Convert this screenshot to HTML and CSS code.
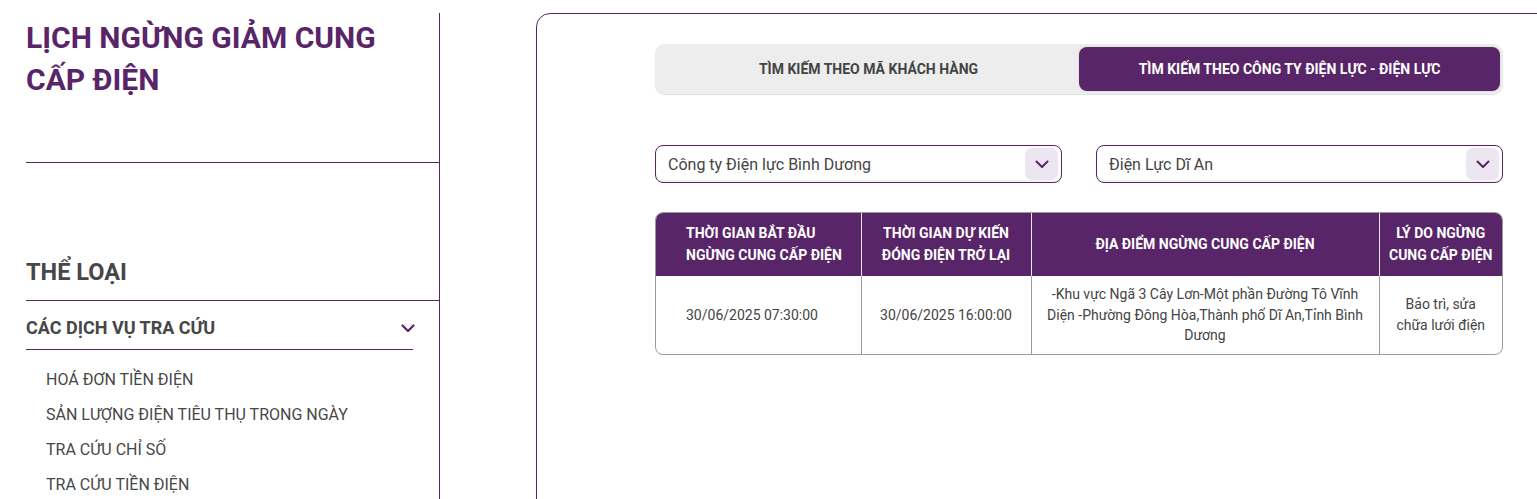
FILE: index.html
```html
<!DOCTYPE html>
<html lang="vi">
<head>
<meta charset="utf-8">
<title>Lịch ngừng giảm cung cấp điện</title>
<link rel="stylesheet" href="styles.css">
</head>
<body>
<div class="page">
  <aside class="sidebar">
    <div class="title-block">
      <h1 class="page-title">LỊCH NGỪNG GIẢM CUNG CẤP ĐIỆN</h1>
    </div>
    <div class="category">
      <h2 class="cat-title">THỂ LOẠI</h2>
      <div class="group">
        <div class="group-head">
          <span>CÁC DỊCH VỤ TRA CỨU</span>
          <svg class="group-chevron" width="14" height="9" viewBox="0 0 14 9"><path d="M1.5 1.5 L7 7 L12.5 1.5" fill="none" stroke="#582568" stroke-width="2.2" stroke-linecap="round" stroke-linejoin="round"/></svg>
        </div>
        <ul class="group-list">
          <li>HOÁ ĐƠN TIỀN ĐIỆN</li>
          <li>SẢN LƯỢNG ĐIỆN TIÊU THỤ TRONG NGÀY</li>
          <li>TRA CỨU CHỈ SỐ</li>
          <li>TRA CỨU TIỀN ĐIỆN</li>
        </ul>
      </div>
    </div>
  </aside>

  <main class="card">
    <div class="content">
      <div class="tabs">
        <div class="tab">TÌM KIẾM THEO MÃ KHÁCH HÀNG</div>
        <div class="tab tab-active">TÌM KIẾM THEO CÔNG TY ĐIỆN LỰC - ĐIỆN LỰC</div>
      </div>

      <div class="selects">
        <div class="select">
          <span class="select-value">Công ty Điện lực Bình Dương</span>
          <span class="select-btn"><svg width="14" height="9" viewBox="0 0 14 9"><path d="M1.5 1.5 L7 7 L12.5 1.5" fill="none" stroke="#582568" stroke-width="2" stroke-linecap="round" stroke-linejoin="round"/></svg></span>
        </div>
        <div class="select">
          <span class="select-value">Điện Lực Dĩ An</span>
          <span class="select-btn"><svg width="14" height="9" viewBox="0 0 14 9"><path d="M1.5 1.5 L7 7 L12.5 1.5" fill="none" stroke="#582568" stroke-width="2" stroke-linecap="round" stroke-linejoin="round"/></svg></span>
        </div>
      </div>

      <div class="table-wrap">
        <table class="schedule">
          <colgroup>
            <col class="c1"><col class="c2"><col class="c3"><col class="c4">
          </colgroup>
          <thead>
            <tr>
              <th class="left">THỜI GIAN BẮT ĐẦU NGỪNG CUNG CẤP ĐIỆN</th>
              <th>THỜI GIAN DỰ KIẾN ĐÓNG ĐIỆN TRỞ LẠI</th>
              <th>ĐỊA ĐIỂM NGỪNG CUNG CẤP ĐIỆN</th>
              <th>LÝ DO NGỪNG CUNG CẤP ĐIỆN</th>
            </tr>
          </thead>
          <tbody>
            <tr>
              <td class="left">30/06/2025 07:30:00</td>
              <td>30/06/2025 16:00:00</td>
              <td>-Khu vực Ngã 3 Cây Lơn-Một phần Đường Tô Vĩnh Diện -Phường Đông Hòa,Thành phố Dĩ An,Tỉnh Bình Dương</td>
              <td>Bảo trì, sửa chữa lưới điện</td>
            </tr>
          </tbody>
        </table>
      </div>
    </div>
  </main>
</div>
</body>
</html>
```

FILE: styles.css
```css
html, body {
  margin: 0;
  padding: 0;
  overflow: hidden;
  background: #ffffff;
}

body {
  font-family: Roboto, "Liberation Sans", Arial, sans-serif;
  color: #444444;
  width: 1537px;
  height: 499px;
}

.page {
  display: flex;
  align-items: flex-start;
  padding: 13px 0 0 26px;
  gap: 96px;
}

/* Sidebar */
.sidebar {
  flex: 0 0 413px;
  width: 413px;
  border-right: 1px solid #582568;
  min-height: 600px;
}

.title-block {
  padding: 4px 0 61px;
  border-bottom: 1px solid #582568;
}

.page-title {
  margin: 0;
  max-width: 385px;
  font-size: 30px;
  line-height: 42px;
  font-weight: 700;
  color: #582568;
}

.category {
  margin-top: 93px;
}

.cat-title {
  margin: 0;
  font-size: 23.5px;
  line-height: 32px;
  font-weight: 700;
  color: #474747;
  padding-bottom: 12px;
  border-bottom: 1px solid #582568;
}

.group {
  margin-right: 26px;
}

.group-head {
  display: flex;
  align-items: center;
  justify-content: space-between;
  padding: 15px 0 9px;
  border-bottom: 1px solid #582568;
  font-size: 18px;
  line-height: 24px;
  font-weight: 700;
  color: #474747;
}

.group-chevron {
  margin-right: -2px;
}

.group-list {
  list-style: none;
  margin: 0;
  padding: 12px 0 0 20px;
}

.group-list li {
  font-size: 16px;
  line-height: 35px;
  color: #474747;
}

/* Card */
.card {
  flex: 0 0 1086px;
  width: 1086px;
  border: 1px solid #582568;
  border-radius: 14px;
  min-height: 600px;
  box-sizing: border-box;
}

.content {
  width: 848px;
  margin-left: 118px;
  padding-top: 30px;
}

.tabs {
  display: flex;
  padding: 3px;
  background: #ededed;
  border-radius: 10px;
  box-shadow: 0 1px 1px #dfe1e6;
}

.tab {
  flex: 1 1 0;
  height: 44px;
  display: flex;
  align-items: center;
  justify-content: center;
  font-size: 14px;
  font-weight: 700;
  color: #444444;
  border-radius: 8px;
}

.tab-active {
  background: #582568;
  color: #ffffff;
  box-shadow: 0 0 2px rgba(0, 0, 0, 0.15);
}

.selects {
  display: flex;
  gap: 34px;
  margin-top: 51px;
}

.select {
  flex: 1 1 0;
  height: 38px;
  box-sizing: border-box;
  border: 1px solid #582568;
  border-radius: 8px;
  display: flex;
  align-items: center;
  justify-content: space-between;
  padding: 0 3px 0 12px;
  box-shadow: inset 0 -2px 2px rgba(0, 0, 0, 0.06);
}

.select-value {
  font-size: 16px;
  color: #444444;
}

.select-btn {
  width: 33px;
  height: 32px;
  border-radius: 7px;
  background: #ece6f1;
  display: flex;
  align-items: center;
  justify-content: center;
}

.table-wrap {
  margin-top: 29px;
  border: 1px solid #9c9c9c;
  border-radius: 8px;
  overflow: hidden;
}

.schedule {
  width: 100%;
  border-collapse: collapse;
  table-layout: fixed;
}

.c1 { width: 205px; }
.c2 { width: 170px; }
.c3 { width: 348px; }
.c4 { width: auto; }

.schedule th {
  background: #582568;
  color: #ffffff;
  font-size: 14px;
  line-height: 22px;
  font-weight: 700;
  padding: 9px 8px 10px;
  text-align: center;
  vertical-align: middle;
  border-left: 1px solid #e9e4ee;
}

.schedule td {
  font-size: 14px;
  line-height: 20.5px;
  color: #444444;
  padding: 8px 12px;
  text-align: center;
  vertical-align: middle;
  border-left: 1px solid #9c9c9c;
}

.schedule th:first-child,
.schedule td:first-child {
  border-left: none;
}

.schedule .left {
  text-align: left;
  padding-left: 30px;
}
```
